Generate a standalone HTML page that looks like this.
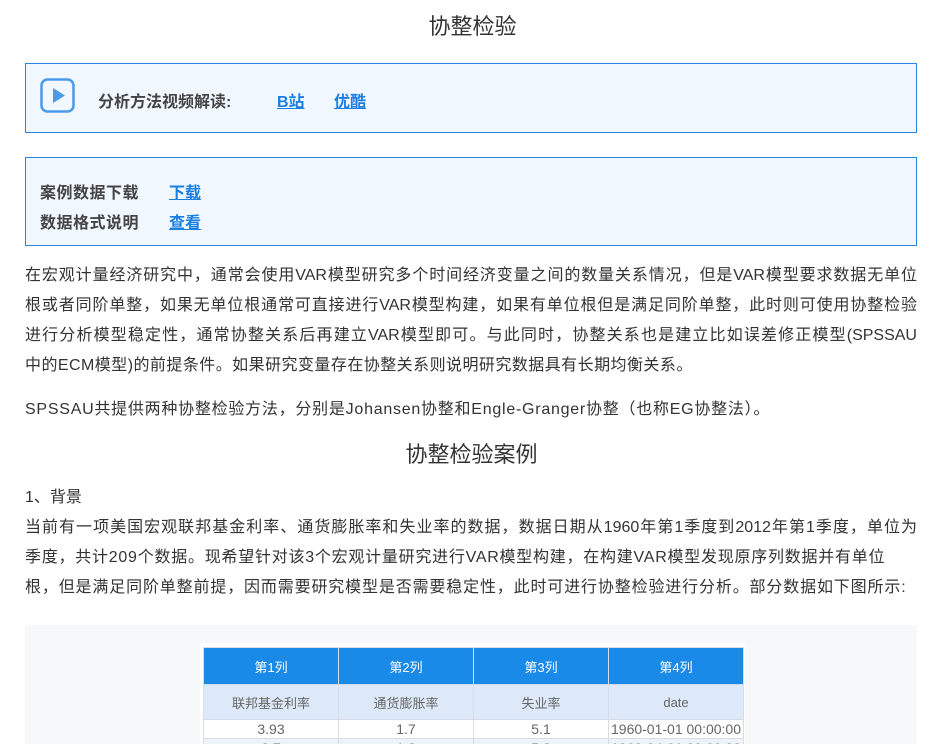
<!DOCTYPE html>
<html><head><meta charset="utf-8"><style>
*{margin:0;padding:0;box-sizing:border-box}
html,body{width:929px;height:744px;overflow:hidden}
body{background:#fff;font-family:"Liberation Sans","Noto Sans CJK SC",sans-serif;color:#333;position:relative}
.a{position:absolute}
h1{position:absolute;top:9px;left:8px;width:929px;text-align:center;font-weight:normal;font-size:22px;color:#333}
.box{position:absolute;left:25px;width:892px;background:#f0f7ff;border:1px solid #2a86e0}
.lnk{color:#1a7fe0;text-decoration:underline;font-weight:bold}
.b{font-weight:bold;color:#444;font-size:16px}
.p{position:absolute;left:25px;width:892px;font-size:16px;line-height:30px;color:#333}
.j{display:block;white-space:nowrap;text-align:justify;text-align-last:justify}
.n{display:block;white-space:nowrap}
.t{position:absolute;left:200px;top:643px;width:545px;height:101px;overflow:hidden;background:#fff}
table{border-collapse:collapse;position:absolute;left:3px;top:4px;width:540px;table-layout:fixed;font-size:13px;color:#666}
td{border:1px solid #d6dde8;text-align:center;white-space:nowrap}
</style></head><body>
<h1>协整检验</h1>
<div class="box" style="top:63px;height:70px">
  <svg class="a" style="left:14px;top:14px" width="35" height="35" viewBox="0 0 35 35"><rect x="1.5" y="1.5" width="32" height="32" rx="6" fill="none" stroke="#4a9ae8" stroke-width="2.5"/><path d="M13 10 L25 17.5 L13 25Z" fill="#4a9ae8"/></svg>
  <span class="a b" style="left:72px;top:24px">分析方法视频解读:</span>
  <span class="a lnk" style="left:251px;top:24px;font-size:16px">B站</span>
  <span class="a lnk" style="left:308px;top:24px;font-size:16px">优酷</span>
</div>
<div class="box" style="top:157px;height:89px">
  <span class="a b" style="left:14px;top:21px;letter-spacing:0.5px">案例数据下载</span>
  <span class="a lnk" style="left:143px;top:21px;font-size:16px">下载</span>
  <span class="a b" style="left:14px;top:51px;letter-spacing:0.5px">数据格式说明</span>
  <span class="a lnk" style="left:143px;top:51px;font-size:16px">查看</span>
</div>
<div class="p" style="top:261px">
<span class="j">在宏观计量经济研究中，通常会使用VAR模型研究多个时间经济变量之间的数量关系情况，但是VAR模型要求数据无单位</span>
<span class="j">根或者同阶单整，如果无单位根通常可直接进行VAR模型构建，如果有单位根但是满足同阶单整，此时则可使用协整检验</span>
<span class="j">进行分析模型稳定性，通常协整关系后再建立VAR模型即可。与此同时，协整关系也是建立比如误差修正模型(SPSSAU</span>
<span class="n" style="letter-spacing:0.45px">中的ECM模型)的前提条件。如果研究变量存在协整关系则说明研究数据具有长期均衡关系。</span>
</div>
<div class="p" style="top:395px"><span class="n" style="letter-spacing:0.75px">SPSSAU共提供两种协整检验方法，分别是Johansen协整和Engle-Granger协整（也称EG协整法）。</span></div>
<div class="a" style="top:437px;left:7px;width:929px;text-align:center;font-size:22px;color:#333">协整检验案例</div>
<div class="p" style="top:483px"><span class="n">1、背景</span></div>
<div class="p" style="top:513px">
<span class="j">当前有一项美国宏观联邦基金利率、通货膨胀率和失业率的数据，数据日期从1960年第1季度到2012年第1季度，单位为</span>
<span class="n" style="letter-spacing:0.75px">季度，共计209个数据。现希望针对该3个宏观计量研究进行VAR模型构建，在构建VAR模型发现原序列数据并有单位</span>
<span class="n" style="letter-spacing:0.85px">根，但是满足同阶单整前提，因而需要研究模型是否需要稳定性，此时可进行协整检验进行分析。部分数据如下图所示:</span>
</div>
<div class="a" style="left:25px;top:625px;width:892px;height:119px;background:#f7f8fa"></div>
<div class="t">
<table>
<colgroup><col style="width:135px"><col style="width:135px"><col style="width:135px"><col style="width:135px"></colgroup>
<tr style="height:37px;background:#1a8ae8;color:#fff"><td>第1列</td><td>第2列</td><td>第3列</td><td>第4列</td></tr>
<tr style="height:35px;background:#dde9f8"><td>联邦基金利率</td><td>通货膨胀率</td><td>失业率</td><td>date</td></tr>
<tr style="height:19px;background:#fff;font-size:14px"><td>3.93</td><td>1.7</td><td>5.1</td><td>1960-01-01 00:00:00</td></tr>
<tr style="height:19px;background:#eef3fa;font-size:14px"><td>3.7</td><td>1.8</td><td>5.2</td><td>1960-04-01 00:00:00</td></tr>
</table>
</div>
</body></html>
